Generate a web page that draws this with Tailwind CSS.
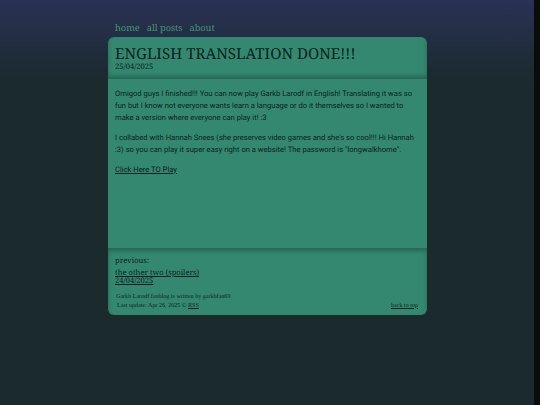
<!DOCTYPE html>
<html lang="en">
<head>
    <meta charset="UTF-8">
    <title>Garkb Larodf fanblog</title>
    <script src="https://cdn.jsdelivr.net/npm/@tailwindcss/browser@4"></script>
</head>
<body class="h-[405px] overflow-hidden flex bg-[#1a2a2d] [text-rendering:geometricPrecision]">
    <div class="w-[534px] h-[405px] bg-gradient-to-b from-[#2a3156] from-0% to-[#1a2a2d] to-[20%] pl-[108px]">
        <nav class="h-[37px] pt-[21px] pl-[7px] flex gap-[7px] font-['Noto_Serif','DejaVu_Serif',serif] text-[9.2px] leading-[14px] text-[#47907f]">
            <a href="#">home</a>
            <a href="#">all posts</a>
            <a href="#">about</a>
        </nav>
        <main class="w-[319px] h-[278px] rounded-[6px] bg-[#34886f] flex flex-col text-[#0c1f22]">
            <header class="h-[42px] px-[7px] pt-[9px] rounded-t-[6px] shadow-[inset_0_-3px_4px_rgba(20,50,50,0.4)]">
                <h1 class="font-['Noto_Serif','DejaVu_Serif',serif] text-[15.2px] leading-[16px] whitespace-nowrap">ENGLISH TRANSLATION DONE!!!</h1>
                <p class="font-['Noto_Serif','DejaVu_Serif',serif] text-[7.6px] leading-[10px]">25/04/2025</p>
            </header>
            <article class="h-[169px] px-[7px] pt-[9px] font-['Roboto',sans-serif] text-[7.6px] leading-[12px]">
                <p class="mb-[8px]">Omigod guys I finished!!! You can now play Garkb Larodf in English! Translating it was so fun but I know not everyone wants learn a language or do it themselves so I wanted to make a version where everyone can play it! :3</p>
                <p class="mb-[8px]">I collabed with Hannah Snees (she preserves video games and she's so cool!!! Hi Hannah :3) so you can play it super easy right on a website! The password is "longwalkhome".</p>
                <a href="#" class="underline">Click Here TO Play</a>
            </article>
            <section class="flex-1 px-[7px] pt-[9px] rounded-b-[6px] shadow-[inset_0_3px_4px_rgba(20,50,50,0.4)] font-['Noto_Serif','DejaVu_Serif',serif] text-[7.6px] leading-[8.5px]">
                <p class="mb-[3px]">previous:</p>
                <a href="#" class="underline block">the other two (spoilers)<br>24/04/2025</a>
                <footer class="mt-[7.5px] pl-[1px] pr-[2px] flex justify-between items-end font-['Liberation_Serif',serif] text-[6.08px] leading-[8.5px]">
                    <div>
                        <p>Garkb Larodf fanblog is written by garkbfan69</p>
                        <p class="pl-[1px]">Last update: Apr 26, 2025 © <a href="#" class="underline">RSS</a></p>
                    </div>
                    <a href="#" class="underline">back to top</a>
                </footer>
            </section>
        </main>
    </div>
    <div class="w-[6px] h-[405px] bg-[#0a0c0c]"></div>
</body>
</html>
